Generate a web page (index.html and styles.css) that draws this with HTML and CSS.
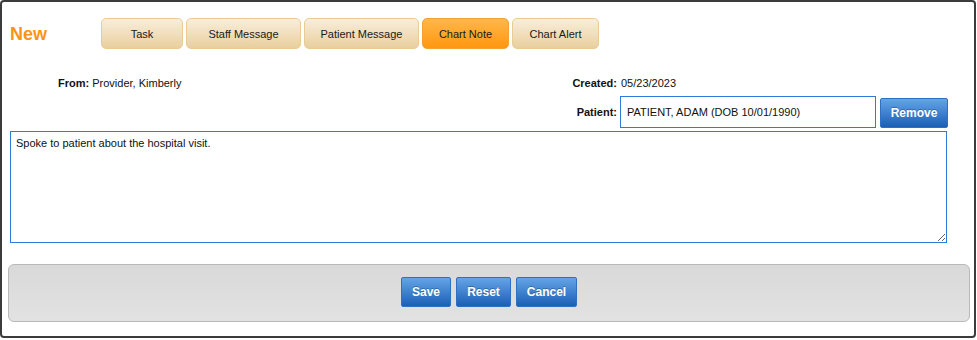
FILE: index.html
```html
<!DOCTYPE html>
<html>
<head>
    <link rel="stylesheet" href="styles.css">
</head>
<body>
    <div class="frame">
        <div class="header">
            <div class="title">New</div>
            <div class="tabs">
                <button class="tab tab-task">Task</button>
                <button class="tab tab-wide">Staff Message</button>
                <button class="tab tab-wide">Patient Message</button>
                <button class="tab tab-mid active">Chart Note</button>
                <button class="tab tab-mid">Chart Alert</button>
            </div>
        </div>

        <div class="meta">
            <div class="from"><b>From:</b> Provider, Kimberly</div>
            <div class="details">
                <div class="row created">
                    <span class="label">Created:</span>
                    <span class="value">05/23/2023</span>
                </div>
                <div class="row patient">
                    <span class="label">Patient:</span>
                    <input class="patient-field" type="text" value="PATIENT, ADAM (DOB 10/01/1990)">
                    <button class="blue-button remove">Remove</button>
                </div>
            </div>
        </div>

        <textarea class="note">Spoke to patient about the hospital visit.</textarea>

        <div class="actions">
            <button class="blue-button save">Save</button>
            <button class="blue-button reset">Reset</button>
            <button class="blue-button cancel">Cancel</button>
        </div>
    </div>
</body>
</html>
```

FILE: styles.css
```css
body {
    margin: 0;
    background-color: #fff;
    font-family: "Liberation Sans", Arial, sans-serif;
    font-size: 11px;
    color: #111;
}

.frame {
    box-sizing: border-box;
    width: 976px;
    height: 338px;
    border: 2px solid #3c3c3c;
    border-radius: 4px;
    background-color: #fff;
}

.header {
    display: flex;
    align-items: center;
    padding-top: 16px;
    padding-left: 8px;
}

.title {
    width: 91px;
    font-size: 18px;
    font-weight: bold;
    color: #fb9416;
    padding-top: 1px;
}

.tabs {
    display: flex;
    gap: 3px;
}

.tab {
    height: 31px;
    padding: 0;
    font-family: "Liberation Sans", Arial, sans-serif;
    font-size: 11px;
    color: #1a1a1a;
    background: linear-gradient(to bottom, #f9eedb, #e9cf9e);
    border: 1px solid #eacb93;
    border-radius: 5px;
}

.tab-task {
    width: 82px;
}

.tab-wide {
    width: 115px;
}

.tab-mid {
    width: 87px;
}

.tab.active {
    background: linear-gradient(to bottom, #ffb749, #ff970f);
    border-color: #f5a133;
}

.meta {
    display: flex;
    justify-content: space-between;
    margin-top: 28px;
    padding-right: 26px;
}

.from {
    padding-left: 56px;
    line-height: 13px;
}

.details {
    display: flex;
    flex-direction: column;
}

.row {
    display: flex;
    align-items: center;
}

.label {
    width: 61px;
    text-align: right;
    font-weight: bold;
}

.created {
    line-height: 13px;
}

.created .value {
    margin-left: 4px;
}

.patient {
    margin-top: 6px;
}

.patient-field {
    box-sizing: border-box;
    width: 256px;
    height: 32px;
    margin-left: 3px;
    padding: 0 6px;
    font-family: "Liberation Sans", Arial, sans-serif;
    font-size: 11px;
    color: #111;
    border: 1px solid #2f7bd6;
    outline: none;
}

.blue-button {
    height: 30px;
    padding: 0;
    font-family: "Liberation Sans", Arial, sans-serif;
    font-size: 12px;
    font-weight: bold;
    color: #fff;
    background: linear-gradient(to bottom, #64a4e6, #1b5fb6);
    border: 1px solid #2e70c4;
    border-radius: 2px;
    text-shadow: 0 -1px 0 rgba(0, 0, 0, 0.25);
}

.remove {
    width: 68px;
    margin-left: 4px;
    margin-top: 2px;
}

.note {
    display: block;
    box-sizing: border-box;
    width: 937px;
    height: 112px;
    margin: 3px 0 0 8px;
    padding: 5px;
    font-family: "Liberation Sans", Arial, sans-serif;
    font-size: 11px;
    line-height: 13px;
    color: #111;
    border: 1px solid #2f7bd6;
    outline: none;
}

.actions {
    box-sizing: border-box;
    display: flex;
    justify-content: center;
    align-items: center;
    gap: 5px;
    width: 962px;
    height: 58px;
    margin: 21px 0 0 6px;
    padding-bottom: 2px;
    background: linear-gradient(to bottom, #d9d9d9, #e2e2e2);
    border: 1px solid #b9b9b9;
    border-radius: 6px;
}

.actions .blue-button {
    height: 30px;
}

.save {
    width: 50px;
}

.reset {
    width: 55px;
}

.cancel {
    width: 61px;
}
```
